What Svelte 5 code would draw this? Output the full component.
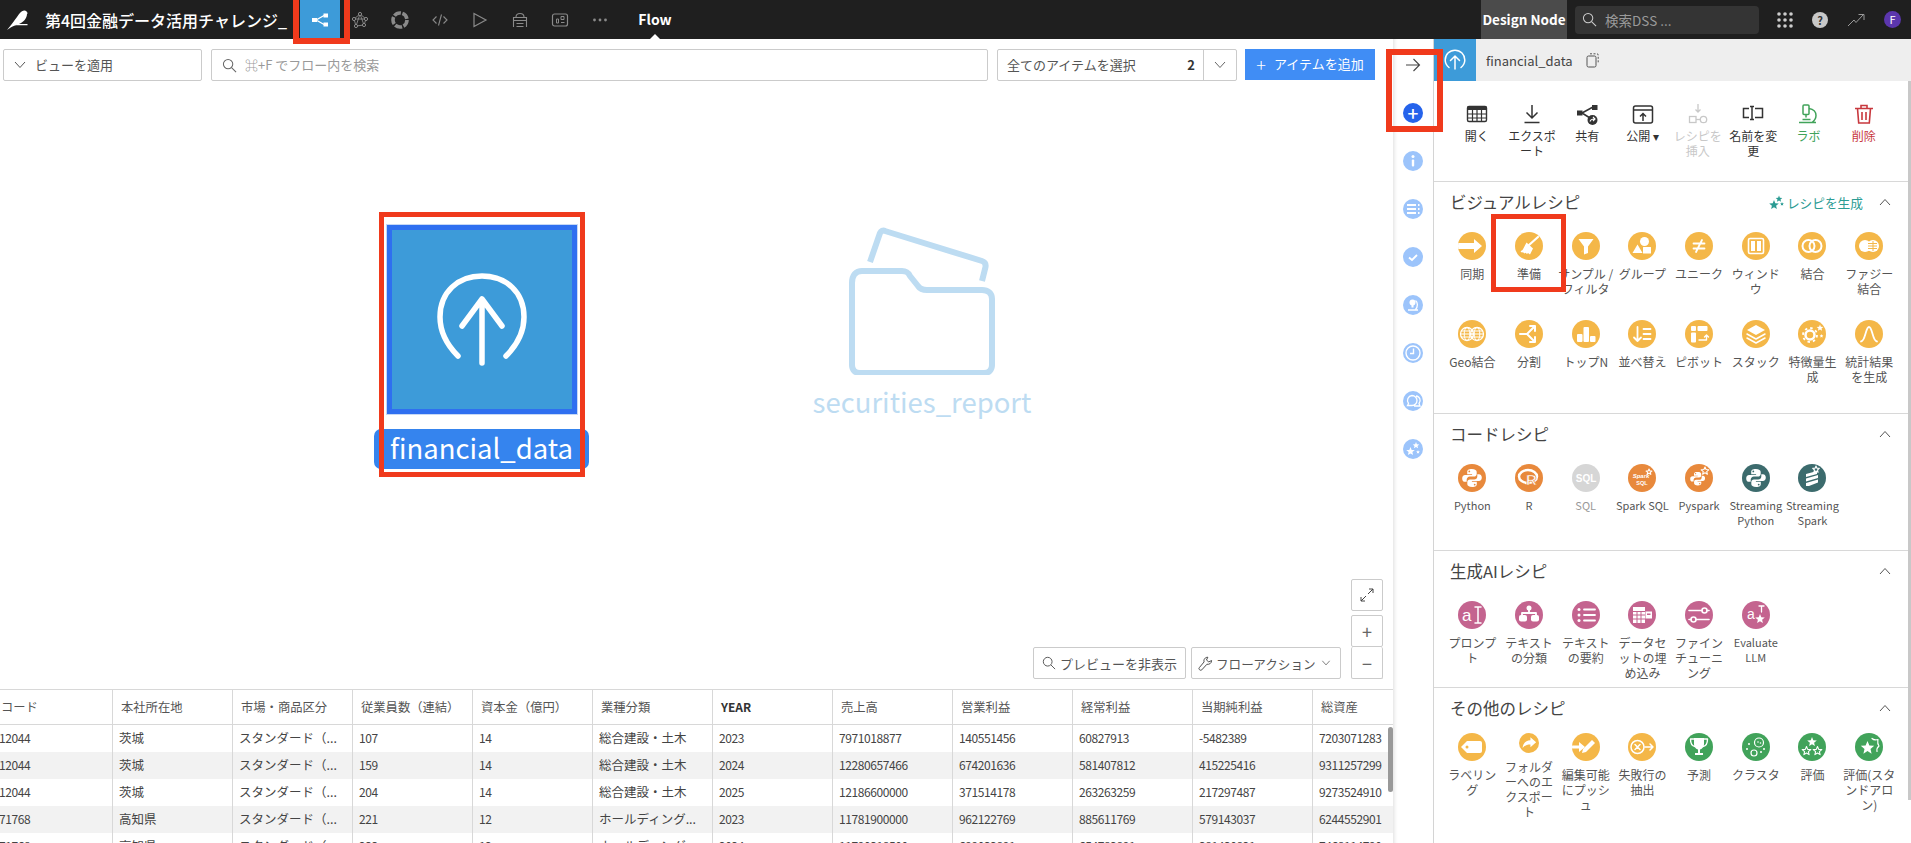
<script>
  // icon helpers
  function star(cx, cy, r, attrs = 'fill="#fff"') {
    const pts = [];
    for (let i = 0; i < 10; i++) {
      const a = -Math.PI / 2 + (i * Math.PI) / 5;
      const d = i % 2 ? r * 0.45 : r;
      pts.push(`${(cx + d * Math.cos(a)).toFixed(1)},${(cy + d * Math.sin(a)).toFixed(1)}`);
    }
    return `<polygon points="${pts.join(' ')}" ${attrs}/>`;
  }
  const line = (d, w = 2) =>
    `<path d="${d}" fill="none" stroke="#fff" stroke-width="${w}" stroke-linecap="round" stroke-linejoin="round"/>`;
  const fill = (d) => `<path d="${d}" fill="#fff"/>`;
  const snake = 'M13.9 5c-3.6 0-4.7 1.3-4.7 3v2.2h4.9v.8H7.2c-1.9 0-3 1.3-3 3.4s1.1 3.4 2.8 3.4h1.7v-2.2c0-1.7 1.4-3.1 3.2-3.1h4.2c1.4 0 2.6-1.2 2.6-2.6V8c0-1.6-1.5-3-5-3z';
  const python = fill(snake) + `<path d="${snake}" fill="#fff" transform="rotate(180 14 14)"/>` +
    '<circle cx="11.3" cy="7.4" r=".9" fill="currentColor"/><circle cx="16.7" cy="20.6" r=".9" fill="currentColor"/>';
  const outlineStar = (x, y, r) => star(x, y, r, 'fill="none" stroke="#fff" stroke-width="1.1" stroke-linejoin="round"');

  const YELLOW = '#f4b748', ORANGE = '#e8893c', GREY = '#d6d6d6', TEAL = '#3c6b6d', PINK = '#c4648f', GREEN = '#41a35a';

  const visual = [
    ['同期', fill('M0 11h16V7l8 7-8 7v-4H0z')],
    ['準備', line('M23 5l-9 8', 2.2) + fill('M11.5 10.5l6.5 6-3 6-2-1.5-1 1-1.5-1.2-1 .7-1.5-1.3-1.2.4-1.3-1.4 2-1.2 1-1.8z')],
    ['サンプル /\nフィルタ', fill('M6.5 7h15l-5.5 7.5V21l-4 1.5v-8z')],
    ['グループ', '<circle cx="16.5" cy="9.5" r="4.5" fill="#fff"/>' + fill('M9.5 12.5l5 8.5H4.5z') + '<rect x="15" y="15" width="8" height="6.5" rx=".5" fill="#fff"/>'],
    ['ユニーク', line('M8.5 11.5h11M8.5 16.5h11M17 8l-6 12', 1.8)],
    ['ウィンド\nウ', '<rect x="6.5" y="6.5" width="15" height="15" rx="1.5" fill="none" stroke="#fff" stroke-width="1.6"/><rect x="9" y="9" width="4" height="10" fill="#fff"/><rect x="15" y="9" width="4" height="10" fill="#fff"/>'],
    ['結合', '<circle cx="10.5" cy="14" r="6" fill="none" stroke="#fff" stroke-width="2"/><circle cx="17.5" cy="14" r="6" fill="none" stroke="#fff" stroke-width="2"/>'],
    ['ファジー\n結合', '<circle cx="10" cy="14" r="6" fill="#fff"/><circle cx="18" cy="14" r="6" fill="#fff"/>' + `<path d="M13 11.5h9M13 14h9M13 16.5h9M18 9v10" stroke="${YELLOW}" stroke-width="1" fill="none"/>`],
    ['Geo結合', ['9', '19'].map((x) => `<circle cx="${x}" cy="14" r="6.5" fill="none" stroke="#fff" stroke-width="1.3"/><ellipse cx="${x}" cy="14" rx="2.8" ry="6.5" fill="none" stroke="#fff" stroke-width="1"/><path d="M${+x - 6.5} 14h13M${+x - 6} 11h12M${+x - 6} 17h12" stroke="#fff" stroke-width="1"/>`).join('')],
    ['分割', line('M5 14h7l7-7M12 14l7 7', 2) + line('M15 6h5v5M15 22h5v-5', 2)],
    ['トップN', '<rect x="5" y="14" width="5.5" height="8" rx="1" fill="#fff"/><rect x="11.5" y="7" width="5.5" height="15" rx="1" fill="#fff"/><rect x="18" y="16" width="5.5" height="6" rx="1" fill="#fff"/>'],
    ['並べ替え', line('M9.5 7v14M6 17.5l3.5 3.5 3.5-3.5', 1.8) + line('M15.5 9h7M15.5 14h7M15.5 19h7', 1.8)],
    ['ピボット', '<rect x="6" y="6" width="5" height="5" rx="1" fill="#fff"/><rect x="12.5" y="6" width="10" height="5" rx="1" fill="#fff"/><rect x="6" y="12.5" width="5" height="10" rx="1" fill="#fff"/>' + line('M14 20h7.5v-5M19.5 17l2-2 2 2', 1.4)],
    ['スタック', fill('M14 5l9 5-9 5-9-5z') + line('M5 14l9 5 9-5M5 18l9 5 9-5', 1.5)],
    ['特徴量生\n成', '<circle cx="12" cy="15" r="4.5" fill="none" stroke="#fff" stroke-width="2.5"/><circle cx="12" cy="15" r="7" fill="none" stroke="#fff" stroke-width="1.8" stroke-dasharray="2.5 3"/>' + star(22, 8, 3.5) + star(23.5, 16, 2)],
    ['統計結果\nを生成', line('M6 21.5c4.5 0 4.5-14.5 8-14.5s3.5 14.5 8 14.5', 1.8)]
  ];
  const code = [
    ['Python', python, ORANGE],
    ['R', '<ellipse cx="13" cy="12.5" rx="9" ry="6.5" fill="none" stroke="#fff" stroke-width="2.5"/><text x="11" y="21" font-size="15" font-weight="700" fill="#fff" font-family="Liberation Sans, sans-serif" stroke="' + ORANGE + '" stroke-width=".6">R</text>', ORANGE],
    ['SQL', '<text x="14" y="17.5" font-size="10" font-weight="700" text-anchor="middle" fill="#fff" font-family="Liberation Sans, sans-serif">SQL</text>', GREY],
    ['Spark SQL', '<text x="13" y="14" font-size="6" font-style="italic" font-weight="700" text-anchor="middle" fill="#fff" font-family="Liberation Sans, sans-serif">Spark</text><text x="14" y="21" font-size="5.5" font-weight="700" text-anchor="middle" fill="#fff" font-family="Liberation Sans, sans-serif">SQL</text>' + outlineStar(21, 8, 3), ORANGE],
    ['Pyspark', `<g transform="translate(2 4) scale(.76)">${python}</g>` + outlineStar(20, 7, 4), ORANGE],
    ['Streaming\nPython', python, TEAL],
    ['Streaming\nSpark', fill('M8 10l11-3v3L8 13zM8 14.5l12-3.5v3L8 17.5zM8 19l12-3.5v3l-9 3.5H8z') + outlineStar(18, 5.5, 3.5), TEAL]
  ];
  const genai = [
    ['プロンプ\nト', '<text x="4" y="20" font-size="17" fill="#fff" font-family="Liberation Sans, sans-serif">a</text>' + line('M17 6h6M20 6v16M17 22h6', 1.5)],
    ['テキスト\nの分類', line('M14 7v5M7 14v-2h14v2', 1.8) + '<circle cx="14" cy="7" r="2.5" fill="#fff"/><rect x="4" y="14" width="8" height="6.5" rx="2" fill="#fff"/><rect x="16" y="14" width="8" height="6.5" rx="2" fill="#fff"/>'],
    ['テキスト\nの要約', line('M12 8.5h11M12 14h11M12 19.5h11', 1.8) + '<circle cx="7" cy="8.5" r="1.5" fill="#fff"/><circle cx="7" cy="14" r="1.5" fill="#fff"/><circle cx="7" cy="19.5" r="1.5" fill="#fff"/>'],
    ['データセ\nットの埋\nめ込み', '<rect x="5" y="6" width="12" height="16" fill="#fff"/>' + `<path d="M5 10.5h12M5 14h12M5 18h12M9 10v12M13 10v12" stroke="${PINK}" stroke-width="1"/>` + `<rect x="17.5" y="10.5" width="6.5" height="7" fill="#fff"/><rect x="19" y="12.5" width="3.5" height="1.5" fill="${PINK}"/>`],
    ['ファイン\nチューニ\nング', line('M4 9.5h13M22 9.5h2M4 18.5h2M11 18.5h13', 1.6) + '<circle cx="19.5" cy="9.5" r="2.5" fill="none" stroke="#fff" stroke-width="1.6"/><circle cx="8.5" cy="18.5" r="2.5" fill="none" stroke="#fff" stroke-width="1.6"/>'],
    ['Evaluate\nLLM', '<text x="5" y="18" font-size="14" fill="#fff" font-family="Liberation Sans, sans-serif">a</text>' + line('M17 5h5M19.5 5v6', 1.3) + star(18, 18, 5)]
  ].map((r) => [...r, PINK]);
  const other = [
    ['ラベリン\nグ', fill('M9 8h13a2 2 0 0 1 2 2v8a2 2 0 0 1-2 2H9l-6-6z') + `<circle cx="9" cy="14" r="1.5" fill="${YELLOW}"/>`, YELLOW],
    ['フォルダ\nーへのエ\nクスポー\nト', fill('M16 6l8 7-8 7v-4c-5 0-8 1.5-11 5 .5-6 4-10.5 11-11z'), YELLOW],
    ['編集可能\nにプッシ\nュ', fill('M0 12.5h7V9l6 5-6 5v-3.5H0z') + fill('M20 7l3 3-9 9-4 1 1-4z'), YELLOW],
    ['失敗行の\n抽出', '<circle cx="9.5" cy="14" r="6.5" fill="none" stroke="#fff" stroke-width="1.5"/>' + line('M7 11.5l5 5M12 11.5l-5 5M17 14h8M22 11l3 3-3 3', 1.5), YELLOW],
    ['予測', line('M9 6H5.5c0 5 1.5 7 4.5 7.5M19 6h3.5c0 5-1.5 7-4.5 7.5', 1.4) + fill('M9 5h10v6c0 3.5-2.5 5.5-5 5.5S9 14.5 9 11zM13 16h2v4h3v2h-8v-2h3z'), GREEN],
    ['クラスタ', '<circle cx="17" cy="9.5" r="4.5" fill="none" stroke="#fff" stroke-width="1.2"/><circle cx="12" cy="20" r="3" fill="none" stroke="#fff" stroke-width="1.2"/><circle cx="16" cy="9" r=".8" fill="#fff"/><circle cx="18.5" cy="10" r=".8" fill="#fff"/><circle cx="7" cy="11" r="1" fill="#fff"/><circle cx="5" cy="16" r="1" fill="#fff"/><circle cx="22" cy="16" r="1" fill="#fff"/><circle cx="19" cy="19" r="1" fill="#fff"/>', GREEN],
    ['評価', star(14, 9, 5) + outlineStar(8.5, 18, 4.5) + outlineStar(19.5, 18, 4.5), GREEN],
    ['評価(スタ\nンドアロ\nン)', star(12.5, 15, 7) + line('M17 5.5c2 2 4 1.5 6 1-.5 3-1 4 1 6.5-2 1.5-2.5 2.5-2 5.5', 1.2), GREEN]
  ];
  const sections = [
    { title: 'ビジュアルレシピ', recipes: visual.map((r) => [...r, YELLOW]), generate: true },
    { title: 'コードレシピ', recipes: code },
    { title: '生成AIレシピ', recipes: genai },
    { title: 'その他のレシピ', recipes: other, tight: true }
  ];

  const actions = [
    { label: '開く', icon: '<rect x="2.5" y="4.5" width="19" height="15" rx="1.5" fill="none" stroke="currentColor" stroke-width="1.4"/><rect x="2.5" y="4.5" width="19" height="3.5" fill="currentColor"/><path d="M2.5 12h19M2.5 16h19M7.5 8v11M12 8v11M16.5 8v11" stroke="currentColor" stroke-width="1.2"/>' },
    { label: 'エクスポ\nート', icon: '<path d="M12 3v13M6.5 10.5L12 16l5.5-5.5M4.5 20.5h15" fill="none" stroke="currentColor" stroke-width="1.5"/>' },
    { label: '共有', icon: '<rect x="2" y="8.5" width="5.5" height="5" fill="currentColor"/><rect x="17" y="3" width="5.5" height="5" fill="currentColor"/><path d="M7 11l11-6M7 11l8 5" stroke="currentColor" stroke-width="1.5"/><circle cx="17.5" cy="18" r="5" fill="currentColor"/><path d="M15 19.5c.5-2 2-2.5 4.5-2.5M18 15l2 2-2 2" stroke="#fff" stroke-width="1.1" fill="none"/>' },
    { label: '公開 ▾', icon: '<rect x="2.5" y="4" width="19" height="17" rx="2" fill="none" stroke="currentColor" stroke-width="1.5"/><path d="M2.5 8h19M12 19v-7.5M9 14.5l3-3 3 3" fill="none" stroke="currentColor" stroke-width="1.5"/>' },
    { label: 'レシピを\n挿入', off: true, icon: '<path d="M12 2v8M9.5 7.5L12 10l2.5-2.5" fill="none" stroke="currentColor" stroke-width="1.3"/><rect x="3.5" y="14.5" width="6.5" height="6" fill="none" stroke="currentColor" stroke-width="1.3"/><path d="M10 17.5h4" stroke="currentColor" stroke-width="1.3"/><circle cx="17.5" cy="17.5" r="3.2" fill="none" stroke="currentColor" stroke-width="1.3"/>' },
    { label: '名前を変\n更', icon: '<path d="M8 6.5H2.5v9H8M14 6.5h7.5v9H14M9 4.5h4M9 17.5h4M11 4.5v13" fill="none" stroke="currentColor" stroke-width="1.5"/>' },
    { label: 'ラボ', green: true, icon: '<rect x="7" y="3" width="6" height="9.5" rx="1" fill="none" stroke="currentColor" stroke-width="1.5"/><path d="M10 12.5v3M3 20.5h17M13 6.5c5 .5 7 4 7 7 0 3-2 5.5-4 7" fill="none" stroke="currentColor" stroke-width="1.5"/><path d="M6.5 17.5h8" stroke="currentColor" stroke-width="1.5"/>' },
    { label: '削除', red: true, icon: '<path d="M3 6.500h18M9 6.500V3.500h6v3M5.500 6.500l1.200 14.500h10.600l1.200-14.500M10 10v8M14 10v8" fill="none" stroke="currentColor" stroke-width="1.6"/>' }
  ];

  const navIcons = [
    '<path d="M10 4L4 9l2 7 8-1 2-6zM4 9h12M10 4l-4 12M10 4l4 11" fill="none" stroke="#8a8a8a" stroke-width=".9"/><g fill="#1f1f1f" stroke="#8a8a8a" stroke-width="1"><circle cx="10" cy="4" r="1.6"/><circle cx="4" cy="9" r="1.6"/><circle cx="16" cy="9" r="1.6"/><circle cx="6" cy="16" r="1.6"/><circle cx="14" cy="15" r="1.6"/></g>',
    '<circle cx="10" cy="10" r="7" fill="none" stroke="#8a8a8a" stroke-width="3.6" stroke-dasharray="7.3 1.5"/>',
    '<path d="M6.500 6.500L3 10l3.500 3.500M13.500 6.500L17 10l-3.500 3.500M11.500 4.500l-3 11" fill="none" stroke="#8a8a8a" stroke-width="1.100"/>',
    '<path d="M4 3.500l12 6.500-12 6.500z" fill="none" stroke="#8a8a8a" stroke-width="1.200"/>',
    '<path d="M6 7c0-2.500 1.500-3.500 4-3.500s4 1 4 3.500M3.500 7.500h13v3h-13zM3.500 10.500v6.500M16.500 10.500v6.500M6.500 13.500h7M6.500 16.500h7" fill="none" stroke="#8a8a8a" stroke-width="1.100"/>',
    '<rect x="2.500" y="4" width="15" height="12" rx="2" fill="none" stroke="#8a8a8a" stroke-width="1.200"/><path d="M6.500 9v4M6.500 9h2v4h-2M11 6.500h3v3h-3zM11 12.500h3.500" fill="none" stroke="#8a8a8a" stroke-width="1"/>',
    '<circle cx="4.500" cy="10" r="1.400" fill="#8a8a8a"/><circle cx="10" cy="10" r="1.400" fill="#8a8a8a"/><circle cx="15.500" cy="10" r="1.400" fill="#8a8a8a"/>'
  ];

  const strip = [
    '<circle cx="10" cy="5.5" r="1.5" fill="#fff"/><rect x="8.8" y="8.5" width="2.4" height="7" rx="1" fill="#fff"/>',
    '<path d="M4 6h9M4 10h9M4 14h9" stroke="#fff" stroke-width="1.8"/><path d="M15 6h1.500M15 10h1.500M15 14h1.500" stroke="#fff" stroke-width="1.8"/>',
    '<path d="M6 10.5l3 2.5 5-5" fill="none" stroke="#fff" stroke-width="1.8"/>',
    '<circle cx="9.5" cy="7.5" r="3" fill="#fff"/><rect x="8.5" y="9.5" width="2" height="3" fill="#fff"/><path d="M5 15h10M12.5 5.5c2.500 2 2.500 6.500 0 9" fill="none" stroke="#fff" stroke-width="1.3"/>',
    '<circle cx="10" cy="10" r="7" fill="none" stroke="#fff" stroke-width="1.4"/><path d="M10.5 5.5v5H7" fill="none" stroke="#fff" stroke-width="1.4"/>',
    '<path d="M9 4.500a5 5 0 0 1 0 10H4.500l1-2a5 5 0 0 1 3.500-8zM13 5a4.500 4.500 0 0 1 3 7.500l1 2.500h-6" fill="none" stroke="#fff" stroke-width="1.3"/>',
    star(7.5, 12.5, 4.5) + star(13, 6.5, 3.5) + star(15, 13, 2)
  ];

  const columns = ['コード', '本社所在地', '市場・商品区分', '従業員数（連結）', '資本金（億円）', '業種分類', 'YEAR', '売上高', '営業利益', '経常利益', '当期純利益', '総資産'];
  const market = 'スタンダード（...';
  const rows = [
    ['12044', '茨城', market, '107', '14', '総合建設・土木', '2023', '7971018877', '140551456', '60827913', '-5482389', '7203071283'],
    ['12044', '茨城', market, '159', '14', '総合建設・土木', '2024', '12280657466', '674201636', '581407812', '415225416', '9311257299'],
    ['12044', '茨城', market, '204', '14', '総合建設・土木', '2025', '12186600000', '371514178', '263263259', '217297487', '9273524910'],
    ['71768', '高知県', market, '221', '12', 'ホールディング...', '2023', '11781900000', '962122769', '885611769', '579143037', '6244552901'],
    ['71768', '高知県', market, '233', '12', 'ホールディング...', '2024', '11790318500', '699032891', '654782891', '381430821', '7468114790']
  ];
  const isNum = (v) => /^-?\d+$/.test(v);
  const isLatin = (v) => /^[\x00-\x7f]+$/.test(v);
</script>

{#snippet search(size)}
  <svg class="glyph" width={size} height={size} viewBox="0 0 16 16"><circle cx="6.5" cy="6.5" r="5" fill="none" stroke="currentColor" stroke-width="1.1"/><path d="M10.2 10.2L15 15" stroke="currentColor" stroke-width="1.1"/></svg>
{/snippet}
{#snippet chevron(up)}
  <svg class="glyph" width="12" height="8" viewBox="0 0 12 8"><path d={up ? 'M1 7l5-5.5L11 7' : 'M1 1l5 5.5L11 1'} fill="none" stroke="currentColor" stroke-width="1"/></svg>
{/snippet}

<div class="app">
  <header class="topbar">
    <svg class="logo" width="24" height="24" viewBox="0 0 24 24"><path d="M1 22C5 17 8 13 11 9c2-3 4-6 7-6.500 2-.2 3 1 3 2l1 .5-1 .8c0 3.200-2 7.200-6 9.200-4 2-9 3-14 7z" fill="#fff"/><path d="M11 16h10.500v1.300H9z" fill="#fff"/></svg>
    <div class="project">第4回金融データ活用チャレンジ_</div>
    <div class="nav-active">
      <svg width="18" height="18" viewBox="0 0 18 18"><rect x="1" y="7" width="5" height="4" fill="#fff"/><rect x="12.5" y="2.5" width="4.5" height="4" fill="#fff"/><rect x="12.5" y="11.5" width="4.5" height="4" fill="#fff"/><path d="M5 9l9-5M5 9l9 5" stroke="#fff" stroke-width="1.4"/></svg>
    </div>
    <div class="nav-icons">
      {#each navIcons as icon}
        <span class="nav-icon"><svg width="20" height="20" viewBox="0 0 20 20">{@html icon}</svg></span>
      {/each}
    </div>
    <div class="flow-tab">Flow</div>
    <div class="node-name">Design Node</div>
    <div class="global-search">{@render search(15)}<span>検索DSS ...</span></div>
    <div class="top-tools">
      <svg width="16" height="16" viewBox="0 0 16 16" fill="#ccc">
        {#each [2, 8, 14] as y}{#each [2, 8, 14] as x}<circle cx={x} cy={y} r="1.8" />{/each}{/each}
      </svg>
      <span class="help">?</span>
      <svg width="18" height="14" viewBox="0 0 18 14"><path d="M1 13l6-6 2 2.500L16 2M11.500 1.500H17V7" fill="none" stroke="#999" stroke-width="1"/></svg>
      <span class="avatar">F</span>
    </div>
  </header>

  <div class="main">
    <div class="flow">
      <div class="toolbar">
        <div class="box view">{@render chevron(false)}<span>ビューを適用</span></div>
        <div class="box find">{@render search(15)}<span>⌘+F でフロー内を検索</span></div>
        <div class="box select">
          <span class="select-label">全てのアイテムを選択</span>
          <b>2</b>
          <span class="select-arrow">{@render chevron(false)}</span>
        </div>
        <div class="add"><span class="plus">+</span>アイテムを追加</div>
      </div>

      <div class="canvas">
        <div class="node selected">
          <div class="node-tile">
            <svg width="90" height="96" viewBox="0 0 90 96"><path d="M21 84C10 73 3 60 3 45 3 20 21 4 45 4s42 16 42 41c0 15-7 28-18 39" fill="none" stroke="#fff" stroke-width="5.5" stroke-linecap="round"/><path d="M45 91V30M25 54l20-27 20 27" fill="none" stroke="#fff" stroke-width="5.5" stroke-linecap="round" stroke-linejoin="round"/></svg>
          </div>
          <div class="node-name-tag">financial_data</div>
        </div>
        <div class="node folder">
          <svg width="146" height="148" viewBox="0 0 146 148"><g fill="none" stroke="#bddcf2" stroke-width="6" stroke-linejoin="round"><path d="M21 35L31 6c1-2 3-3 5-2l97 30c3 1 4 3 3.500 6l-3.500 14"/><path d="M3 56c0-8 4-12 10-12h40c4 0 6 1 8 5l8 10c2 3 5 4 9 4h55c6 0 10 3 10 9v66c0 5-3 8-8 8H11c-5 0-8-3-8-8z" /></g></svg>
          <div class="folder-name">securities_report</div>
        </div>

        <div class="zoom-tools">
          <button class="tool"><svg width="14" height="14" viewBox="0 0 14 14"><path d="M8 6l5-5M9 1h4v4M6 8l-5 5M5 13H1V9" fill="none" stroke="#444" stroke-width="1"/></svg></button>
          <div class="zoom-pair"><button class="tool">+</button><button class="tool">−</button></div>
        </div>
        <div class="flow-actions">
          <button class="action-btn">{@render search(14)}プレビューを非表示</button>
          <button class="action-btn flow-action">
            <svg width="15" height="15" viewBox="0 0 16 16"><path d="M1.5 14.5c-.8-.8-.6-1.6 0-2.200l5-6c-.8-2.500 1-5 4-5l-1.500 3 2.500 2 3-1.500c0 3-2.500 4.500-5 4l-5.500 6c-.8.700-1.800.500-2.500-.3z" fill="none" stroke="#444" stroke-width="1"/></svg>
            フローアクション
            <span class="small-chevron">{@render chevron(false)}</span>
          </button>
        </div>
      </div>

      <div class="table">
        <div class="row head">
          {#each columns as c}
            <div class="cell" class:strong={c === 'YEAR'}>{c}</div>
          {/each}
        </div>
        {#each rows as row, i}
          <div class="row" class:odd={i % 2 === 1}>
            {#each row as v}
              <div class="cell" class:num={isNum(v)}>{v}</div>
            {/each}
          </div>
        {/each}
        <div class="table-thumb"></div>
      </div>
    </div>

    <aside class="strip">
      <svg class="strip-arrow" width="16" height="14" viewBox="0 0 16 14"><path d="M1 7h13.500M8.500 1l6 6-6 6" fill="none" stroke="#444" stroke-width="1.1"/></svg>
      <span class="strip-plus">+</span>
      {#each strip as icon}
        <svg class="strip-icon" width="20" height="20" viewBox="0 0 20 20"><circle cx="10" cy="10" r="10" fill="#9cc4fb"/>{@html icon}</svg>
      {/each}
    </aside>

    <section class="panel">
      <div class="panel-head">
        <div class="panel-badge">
          <svg width="22" height="22" viewBox="0 0 22 22"><path d="M5 18.5C2.500 16.500 1.200 14 1.200 11 1.200 5.500 5.500 1.200 11 1.200S20.800 5.500 20.800 11c0 3-1.300 5.500-3.800 7.500" fill="none" stroke="#fff" stroke-width="1.5" stroke-linecap="round"/><path d="M11 20V7M6.500 11.500L11 7l4.500 4.500" fill="none" stroke="#fff" stroke-width="1.5" stroke-linecap="round"/></svg>
        </div>
        <span class="panel-title">financial_data</span>
        <svg width="13" height="15" viewBox="0 0 13 15"><rect x="1" y="3" width="9" height="11" rx="1.5" fill="none" stroke="#555" stroke-width="1"/><path d="M4 .8h7c.7 0 1.200.5 1.200 1.200v8" fill="none" stroke="#555" stroke-width="1" stroke-dasharray="2 1.5"/></svg>
      </div>

      <div class="panel-body">
        <div class="actions">
          {#each actions as a}
            <div class="act" class:off={a.off} class:green={a.green} class:red={a.red}>
              <svg width="24" height="24" viewBox="0 0 24 24">{@html a.icon}</svg>
              <span class="label">{a.label}</span>
            </div>
          {/each}
        </div>

        {#each sections as s}
          <div class="recipes" class:tight={s.tight} class:roomy={s.generate}>
            <div class="recipes-head">
              <h3>{s.title}</h3>
              {#if s.generate}
                <span class="generate">
                  <svg width="15" height="15" viewBox="0 0 15 15">{@html star(5, 10, 5, 'fill="#2c9c94"') + star(10, 4, 3.5, 'fill="#2c9c94"') + star(13, 9, 2, 'fill="#2c9c94"')}</svg>
                  レシピを生成
                </span>
              {/if}
              <span class="collapse">{@render chevron(true)}</span>
            </div>
            <div class="recipe-grid">
              {#each s.recipes as r}
                <div class="recipe" class:muted={r[2] === GREY}>
                  <svg width="28" height="28" viewBox="0 0 28 28" color={r[2]}>
                    <defs><clipPath id="disc"><circle cx="14" cy="14" r="14" /></clipPath></defs>
                    <circle cx="14" cy="14" r="14" fill={r[2]} />
                    <g clip-path="url(#disc)">{@html r[1]}</g>
                  </svg>
                  <span class="label" class:latin={isLatin(r[0])}>{r[0]}</span>
                </div>
              {/each}
            </div>
          </div>
        {/each}
      </div>
      <div class="panel-thumb"></div>
    </section>
  </div>

  <!-- red annotation boxes drawn over the screenshot -->
  <div class="mark m-nav"></div>
  <div class="mark m-strip"></div>
  <div class="mark m-node"></div>
  <div class="mark m-prep"></div>
</div>

<style>
  :global(body) {
    margin: 0;
    overflow: hidden;
  }
  .app {
    position: relative;
    width: 1911px;
    height: 843px;
    overflow: hidden;
    display: flex;
    flex-direction: column;
    background: #fff;
    color: #444;
    font-family: "Noto Sans CJK JP", "Noto Sans", sans-serif;
    font-size: 12px;
  }
  .glyph {
    flex: none;
  }

  .topbar {
    height: 39px;
    flex: none;
    display: flex;
    align-items: center;
    background: #1f1f1f;
    color: #fff;
  }
  .logo {
    margin-left: 6px;
  }
  .project {
    margin-left: 15px;
    width: 255px;
    font-size: 16px;
    font-weight: 500;
    white-space: nowrap;
  }
  .nav-active {
    width: 40px;
    height: 39px;
    background: #3d9bd9;
    display: flex;
    align-items: center;
    justify-content: center;
  }
  .nav-icons {
    display: flex;
  }
  .nav-icon {
    width: 40px;
    display: flex;
    justify-content: center;
  }
  .flow-tab {
    position: relative;
    width: 70px;
    text-align: center;
    font-size: 14px;
    font-weight: 700;
    height: 39px;
    line-height: 38px;
    margin-right: 791px;
  }
  .flow-tab::after {
    content: "";
    position: absolute;
    left: 30px;
    bottom: 0;
    border: 5px solid transparent;
    border-top: 0;
    border-bottom-color: #fff;
  }
  .node-name {
    width: 86px;
    height: 39px;
    line-height: 38px;
    text-align: center;
    background: #4b4b4b;
    font-size: 13.5px;
    font-weight: 700;
    white-space: nowrap;
  }
  .global-search {
    margin-left: 8px;
    width: 184px;
    height: 28px;
    box-sizing: border-box;
    padding-left: 7px;
    display: flex;
    align-items: center;
    gap: 8px;
    background: #343434;
    border-radius: 4px;
    color: #9a9a9a;
    font-size: 13.5px;
  }
  .global-search .glyph {
    color: #ccc;
  }
  .top-tools {
    display: flex;
    align-items: center;
    margin-left: 18px;
    gap: 19px;
  }
  .help {
    width: 16px;
    height: 16px;
    border-radius: 50%;
    background: #c8c8c8;
    color: #333;
    font-size: 11px;
    font-weight: 700;
    text-align: center;
    line-height: 16px;
  }
  .avatar {
    width: 17px;
    height: 17px;
    border-radius: 50%;
    background: #5b36ad;
    font-size: 11px;
    text-align: center;
    line-height: 17px;
  }

  .main {
    flex: 1;
    min-height: 0;
    display: flex;
  }
  .flow {
    width: 1393px;
    flex: none;
    display: flex;
    flex-direction: column;
    min-height: 0;
  }
  .toolbar {
    flex: none;
    height: 32px;
    padding: 10px 18px 0 3px;
    display: flex;
    gap: 9px;
    font-size: 13px;
    position: relative;
    z-index: 1;
  }
  .box {
    box-sizing: border-box;
    height: 32px;
    border: 1px solid #cbcbcb;
    border-radius: 2px;
    display: flex;
    align-items: center;
    color: #555;
  }
  .box > span {
    margin-bottom: 2px;
  }
  .view {
    width: 199px;
    padding-left: 10px;
    gap: 9px;
  }
  .find {
    flex: 1;
    padding-left: 10px;
    gap: 8px;
    color: #999;
  }
  .find .glyph {
    color: #666;
  }
  .select {
    width: 240px;
    padding-left: 9px;
    margin-right: -1px;
  }
  .select-label {
    flex: 1;
  }
  .select b {
    margin-right: 8px;
    margin-bottom: 2px;
    color: #333;
  }
  .box > .select-arrow {
    width: 32px;
    height: 100%;
    margin: 0;
    border-left: 1px solid #cbcbcb;
    display: flex;
    align-items: center;
    justify-content: center;
    color: #666;
  }
  .add {
    width: 130px;
    height: 31px;
    padding-bottom: 2px;
    box-sizing: border-box;
    background: #408df5;
    color: #fff;
    display: flex;
    align-items: center;
    justify-content: center;
    gap: 8px;
    white-space: nowrap;
  }
  .plus {
    font-size: 18px;
    font-weight: 300;
    line-height: 1;
  }

  .canvas {
    position: relative;
    flex: 1;
    min-height: 0;
  }
  .node {
    position: absolute;
    display: flex;
    flex-direction: column;
    align-items: center;
  }
  .selected {
    left: 374px;
    top: 144px;
    width: 215px;
  }
  .node-tile {
    box-sizing: border-box;
    width: 190px;
    height: 189px;
    background: #3d9bd9;
    border: 5px solid #2f6ff0;
    outline: 1px solid #c6d8f5;
    display: flex;
    align-items: center;
    justify-content: center;
  }
  .node-name-tag {
    margin-top: 15px;
    width: 100%;
    height: 40px;
    line-height: 37px;
    border-radius: 7px;
    background: #3584ee;
    color: #fff;
    text-align: center;
    font-size: 27.5px;
  }
  .folder {
    left: 813px;
    top: 146px;
    width: 218px;
  }
  .folder-name {
    margin-top: 9px;
    color: #bddcf2;
    font-size: 27.5px;
    line-height: 34px;
    white-space: nowrap;
  }
  .zoom-tools {
    position: absolute;
    right: 10px;
    bottom: 10px;
    display: flex;
    flex-direction: column;
    gap: 4px;
  }
  .tool {
    display: flex;
    align-items: center;
    justify-content: center;
    width: 32px;
    height: 32px;
    padding: 0;
    background: #fff;
    border: 1px solid #cbcbcb;
    border-radius: 2px;
    font-size: 18px;
    font-family: inherit;
    color: #666;
  }
  .zoom-pair .tool + .tool {
    border-top: 0;
  }
  .flow-actions {
    position: absolute;
    left: 1033px;
    bottom: 10px;
    display: flex;
    gap: 5px;
  }
  .action-btn {
    height: 32px;
    padding: 0 8px;
    display: flex;
    align-items: center;
    gap: 4px;
    background: #fff;
    border: 1px solid #cbcbcb;
    border-radius: 2px;
    font-family: inherit;
    font-size: 13px;
    color: #555;
    white-space: nowrap;
  }
  .flow-action {
    width: 150px;
    padding: 0 6px;
    gap: 3px;
    font-size: 12.6px;
  }
  .small-chevron {
    display: flex;
    transform: scale(0.75);
    margin-left: 1px;
  }

  .table {
    position: relative;
    flex: none;
    height: 154px;
    overflow: hidden;
    border-top: 1px solid #d8d8d8;
    box-sizing: border-box;
  }
  .row {
    display: grid;
    grid-template-columns: repeat(12, 120px);
    margin-left: -7px;
    height: 27px;
    width: 1440px;
  }
  .row.odd {
    background: #f2f2f2;
  }
  .head {
    height: 34px;
    border-bottom: 1px solid #d8d8d8;
  }
  .cell {
    box-sizing: border-box;
    padding: 0 6px;
    border-right: 1px solid #d8d8d8;
    line-height: 26px;
    font-size: 12.5px;
    color: #444;
    white-space: nowrap;
    overflow: hidden;
  }
  .head .cell {
    padding-left: 8px;
    line-height: 34px;
    color: #555;
    font-size: 12.3px;
  }
  .head .strong {
    font-weight: 700;
    color: #333;
    font-size: 12px;
  }
  .num {
    font-size: 12px;
    letter-spacing: -0.4px;
  }
  .table-thumb {
    position: absolute;
    right: 0;
    top: 37px;
    width: 5px;
    height: 65px;
    border-radius: 3px;
    background: #999;
  }

  .strip {
    width: 41px;
    flex: none;
    box-sizing: border-box;
    border-right: 1px solid #d4d4d4;
    box-shadow: inset 5px 0 4px -4px #ddd;
    display: flex;
    flex-direction: column;
    align-items: center;
    padding-top: 19px;
  }
  .strip-arrow {
    height: 14px;
  }
  .strip-plus {
    margin-top: 31px;
    width: 20px;
    height: 20px;
    border-radius: 50%;
    background: #2563eb;
    color: #fff;
    font-size: 19px;
    font-weight: 500;
    line-height: 19px;
    text-align: center;
    margin-bottom: 28px;
  }
  .strip-icon {
    flex: none;
    margin-bottom: 28px;
  }

  .panel {
    position: relative;
    flex: 1;
    min-width: 0;
    overflow: hidden;
    display: flex;
    flex-direction: column;
  }
  .panel-head {
    flex: none;
    height: 42px;
    background: #eee;
    display: flex;
    align-items: center;
  }
  .panel-badge {
    width: 42px;
    height: 42px;
    background: #3d9bd9;
    display: flex;
    align-items: center;
    justify-content: center;
  }
  .panel-title {
    margin: 0 13px 0 10px;
    font-size: 13px;
    color: #444;
  }
  .panel-thumb {
    position: absolute;
    top: 42px;
    right: 0;
    width: 3px;
    height: 719px;
    background: #c8c8c8;
  }
  .label {
    display: block;
    font-size: 12px;
    line-height: 15px;
    text-align: center;
    white-space: pre;
    color: #555;
  }
  .label.latin {
    font-size: 11px;
  }
  .actions {
    box-sizing: border-box;
    height: 100px;
    padding: 21px 0 0 15px;
    display: grid;
    grid-template-columns: repeat(8, 55.3px);
    align-items: start;
  }
  .act {
    display: flex;
    flex-direction: column;
    align-items: center;
    gap: 2px;
    color: #333;
  }
  .act .label {
    color: inherit;
  }
  .act.off {
    color: #c8c8c8;
  }
  .act.green {
    color: #41a35a;
  }
  .act.red {
    color: #c8383e;
  }
  .recipes {
    border-top: 1px solid #d8d8d8;
  }
  .recipes.roomy {
    padding-bottom: 7px;
  }
  .recipes-head {
    height: 40px;
    display: flex;
    align-items: center;
    padding: 0 20px 0 16px;
  }
  .recipes-head h3 {
    flex: 1;
    margin: 0;
    font-size: 16.5px;
    font-weight: 400;
    color: #444;
  }
  .generate {
    display: flex;
    align-items: center;
    gap: 3px;
    margin-right: 16px;
    font-size: 12.7px;
    color: #2c9c94;
  }
  .collapse {
    display: flex;
    color: #555;
  }
  .recipe-grid {
    display: grid;
    grid-template-columns: repeat(8, 56.7px);
    grid-auto-rows: 86px;
    row-gap: 2px;
    padding: 10px 0 0 10px;
  }
  .tight .recipe-grid {
    padding-top: 5px;
  }
  .recipe {
    display: flex;
    flex-direction: column;
    align-items: center;
    gap: 6px;
  }
  .muted .label {
    color: #999;
  }

  .mark {
    position: absolute;
    box-sizing: border-box;
    border: 6px solid #f03a1c;
    pointer-events: none;
  }
  .m-nav {
    left: 293px;
    top: -6px;
    width: 57px;
    height: 50px;
  }
  .m-strip {
    left: 1386px;
    top: 49px;
    width: 57px;
    height: 83px;
  }
  .m-node {
    left: 379px;
    top: 212px;
    width: 206px;
    height: 265px;
    border-width: 5px;
  }
  .m-prep {
    left: 1491px;
    top: 214px;
    width: 75px;
    height: 78px;
    border-width: 5px;
  }
</style>
